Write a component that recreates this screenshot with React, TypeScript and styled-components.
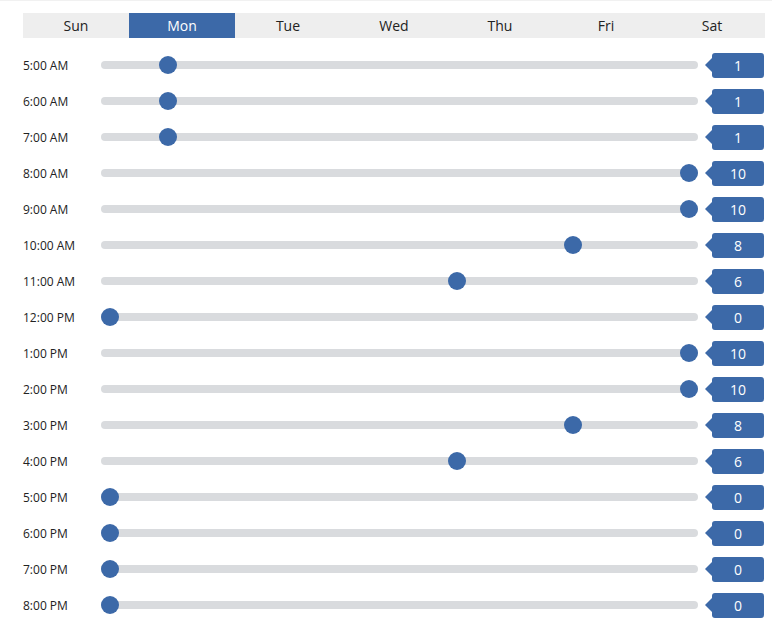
import React, { useState } from "react";
import styled, { createGlobalStyle } from "styled-components";

const GlobalStyle = createGlobalStyle`
  html, body {
    margin: 0;
    padding: 0;
    background: #ffffff;
    font-family: "Open Sans", "Noto Sans", "Liberation Sans", sans-serif;
  }
`;

const Card = styled.div`
  width: 772px;
  height: 632px;
  box-sizing: border-box;
  padding: 12px 7px 0 23px;
  border-top: 1px solid #f1f1f1;
  background: #fff;
`;

const Tabs = styled.div`
  display: grid;
  grid-template-columns: repeat(7, 106px);
  height: 25px;
  background: #eeeeee;
  margin-bottom: 9px;
`;

const Tab = styled.div<{ $active: boolean }>`
  display: flex;
  align-items: center;
  justify-content: center;
  font-size: 14px;
  color: ${(p) => (p.$active ? "#ffffff" : "#222")};
  background: ${(p) => (p.$active ? "#3c69a8" : "transparent")};
  cursor: pointer;
`;

const Rows = styled.div`
  display: flex;
  flex-direction: column;
`;

const Row = styled.div`
  display: flex;
  align-items: center;
  height: 36px;
`;

const Label = styled.div`
  width: 78px;
  font-size: 12px;
  color: #222;
`;

const Track = styled.div`
  position: relative;
  width: 597px;
  height: 8px;
  border-radius: 4px;
  background: #d9dbde;
`;

const Thumb = styled.div`
  position: absolute;
  top: 50%;
  width: 18px;
  height: 18px;
  margin: -9px 0 0 -9px;
  border-radius: 50%;
  background: #3c69a8;
`;

const Badge = styled.div`
  position: relative;
  margin-left: 14px;
  width: 52px;
  height: 25px;
  border-radius: 3px;
  background: #3c69a8;
  color: #fff;
  font-size: 14px;
  display: flex;
  align-items: center;
  justify-content: center;

  &::before {
    content: "";
    position: absolute;
    left: -7px;
    top: 50%;
    margin-top: -7px;
    border-style: solid;
    border-width: 7px 7px 7px 0;
    border-color: transparent #3c69a8 transparent transparent;
  }
`;

const days = ["Sun", "Mon", "Tue", "Wed", "Thu", "Fri", "Sat"];

const hours = [
  ["5:00 AM", 1],
  ["6:00 AM", 1],
  ["7:00 AM", 1],
  ["8:00 AM", 10],
  ["9:00 AM", 10],
  ["10:00 AM", 8],
  ["11:00 AM", 6],
  ["12:00 PM", 0],
  ["1:00 PM", 10],
  ["2:00 PM", 10],
  ["3:00 PM", 8],
  ["4:00 PM", 6],
  ["5:00 PM", 0],
  ["6:00 PM", 0],
  ["7:00 PM", 0],
  ["8:00 PM", 0],
] as const;

const MAX = 10;

export default function App() {
  const [day, setDay] = useState("Mon");

  return (
    <>
      <GlobalStyle />
      <Card>
        <Tabs>
          {days.map((d) => (
            <Tab key={d} $active={d === day} onClick={() => setDay(d)}>
              {d}
            </Tab>
          ))}
        </Tabs>
        <Rows>
          {hours.map(([time, value]) => (
            <Row key={time}>
              <Label>{time}</Label>
              <Track>
                <Thumb style={{ left: `${9 + (579 * value) / MAX}px` }} />
              </Track>
              <Badge>{value}</Badge>
            </Row>
          ))}
        </Rows>
      </Card>
    </>
  );
}
